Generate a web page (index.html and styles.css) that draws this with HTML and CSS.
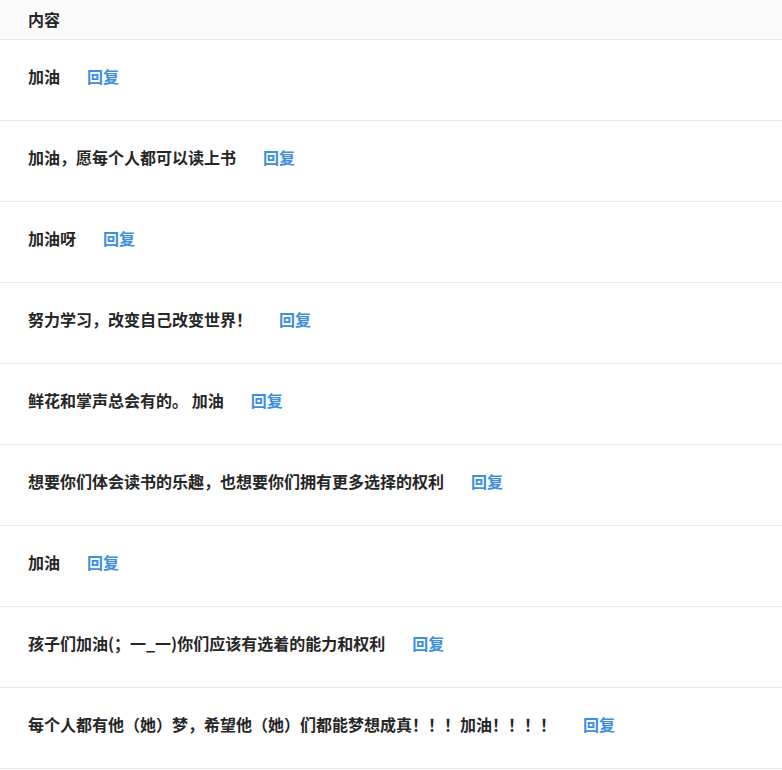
FILE: index.html
```html
<!DOCTYPE html>
<html lang="zh-CN">
<head>
    <meta charset="UTF-8">
    <meta name="viewport" content="width=device-width, initial-scale=1.0">
    <title>留言</title>
    <link rel="stylesheet" href="styles.css">
</head>
<body>
    <table class="msg-table">
        <thead>
            <tr><th>内容</th></tr>
        </thead>
        <tbody>
            <tr><td>加油<a href="#" class="reply">回复</a></td></tr>
            <tr><td>加油，愿每个人都可以读上书<a href="#" class="reply">回复</a></td></tr>
            <tr><td>加油呀<a href="#" class="reply">回复</a></td></tr>
            <tr><td>努力学习，改变自己改变世界！<a href="#" class="reply">回复</a></td></tr>
            <tr><td>鲜花和掌声总会有的。 加油<a href="#" class="reply">回复</a></td></tr>
            <tr><td>想要你们体会读书的乐趣，也想要你们拥有更多选择的权利<a href="#" class="reply">回复</a></td></tr>
            <tr><td>加油<a href="#" class="reply">回复</a></td></tr>
            <tr><td>孩子们加油(；一_一)你们应该有选着的能力和权利<a href="#" class="reply">回复</a></td></tr>
            <tr><td>每个人都有他（她）梦，希望他（她）们都能梦想成真！！！加油！！！！<a href="#" class="reply">回复</a></td></tr>
        </tbody>
    </table>
</body>
</html>
```

FILE: styles.css
```css
body {
    margin: 0;
    padding: 0;
    background-color: #fff;
    font-family: "Noto Sans CJK SC", "Noto Sans", sans-serif;
    font-size: 16px;
    color: #262626;
}

.msg-table {
    width: 100%;
    border-collapse: collapse;
}

.msg-table th,
.msg-table td {
    text-align: left;
    font-weight: bold;
    border-bottom: 1px solid #e8e8e8;
    line-height: 24px;
}

.msg-table th {
    background-color: #fafafa;
    padding: 7px 28px 8px;
}

.msg-table td {
    padding: 24px 28px 32px;
}

.reply {
    margin-left: 27px;
    color: #3d8fe0;
    text-decoration: none;
}
```
